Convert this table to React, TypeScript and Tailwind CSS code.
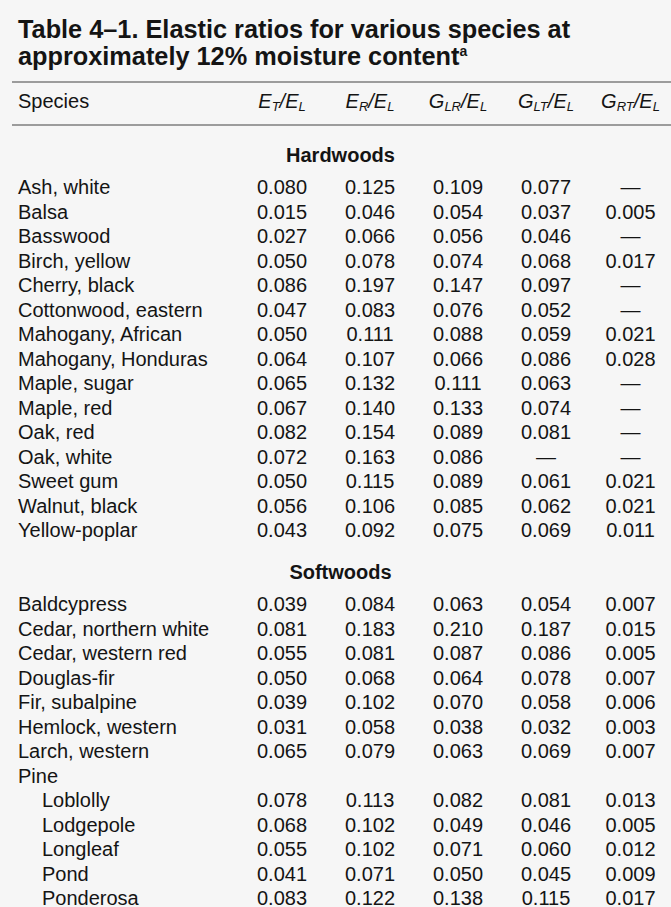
type Row = { name: string; v: string[]; indent?: boolean };

const D = "—";

const hardwoods: Row[] = [
  { name: "Ash, white", v: ["0.080", "0.125", "0.109", "0.077", D] },
  { name: "Balsa", v: ["0.015", "0.046", "0.054", "0.037", "0.005"] },
  { name: "Basswood", v: ["0.027", "0.066", "0.056", "0.046", D] },
  { name: "Birch, yellow", v: ["0.050", "0.078", "0.074", "0.068", "0.017"] },
  { name: "Cherry, black", v: ["0.086", "0.197", "0.147", "0.097", D] },
  { name: "Cottonwood, eastern", v: ["0.047", "0.083", "0.076", "0.052", D] },
  { name: "Mahogany, African", v: ["0.050", "0.111", "0.088", "0.059", "0.021"] },
  { name: "Mahogany, Honduras", v: ["0.064", "0.107", "0.066", "0.086", "0.028"] },
  { name: "Maple, sugar", v: ["0.065", "0.132", "0.111", "0.063", D] },
  { name: "Maple, red", v: ["0.067", "0.140", "0.133", "0.074", D] },
  { name: "Oak, red", v: ["0.082", "0.154", "0.089", "0.081", D] },
  { name: "Oak, white", v: ["0.072", "0.163", "0.086", D, D] },
  { name: "Sweet gum", v: ["0.050", "0.115", "0.089", "0.061", "0.021"] },
  { name: "Walnut, black", v: ["0.056", "0.106", "0.085", "0.062", "0.021"] },
  { name: "Yellow-poplar", v: ["0.043", "0.092", "0.075", "0.069", "0.011"] },
];

const softwoods: Row[] = [
  { name: "Baldcypress", v: ["0.039", "0.084", "0.063", "0.054", "0.007"] },
  { name: "Cedar, northern white", v: ["0.081", "0.183", "0.210", "0.187", "0.015"] },
  { name: "Cedar, western red", v: ["0.055", "0.081", "0.087", "0.086", "0.005"] },
  { name: "Douglas-fir", v: ["0.050", "0.068", "0.064", "0.078", "0.007"] },
  { name: "Fir, subalpine", v: ["0.039", "0.102", "0.070", "0.058", "0.006"] },
  { name: "Hemlock, western", v: ["0.031", "0.058", "0.038", "0.032", "0.003"] },
  { name: "Larch, western", v: ["0.065", "0.079", "0.063", "0.069", "0.007"] },
  { name: "Pine", v: [] },
  { name: "Loblolly", v: ["0.078", "0.113", "0.082", "0.081", "0.013"], indent: true },
  { name: "Lodgepole", v: ["0.068", "0.102", "0.049", "0.046", "0.005"], indent: true },
  { name: "Longleaf", v: ["0.055", "0.102", "0.071", "0.060", "0.012"], indent: true },
  { name: "Pond", v: ["0.041", "0.071", "0.050", "0.045", "0.009"], indent: true },
  { name: "Ponderosa", v: ["0.083", "0.122", "0.138", "0.115", "0.017"], indent: true },
];

const cols = "grid grid-cols-[220px_88px_88px_88px_88px_81px]";

function Ratio({ a, sa, b, sb }: { a: string; sa: string; b: string; sb: string }) {
  return (
    <span className="italic">
      {a}
      <sub className="text-[13px]">{sa}</sub>/{b}
      <sub className="text-[13px]">{sb}</sub>
    </span>
  );
}

function TableRow({ row }: { row: Row }) {
  return (
    <div className={`${cols} leading-[24.5px]`}>
      <div className={row.indent ? "pl-[24px]" : ""}>{row.name}</div>
      {row.v.map((x, i) => (
        <div key={i} className="text-center">
          {x}
        </div>
      ))}
    </div>
  );
}

function Section({ title, rows }: { title: string; rows: Row[] }) {
  return (
    <div>
      <div className="pr-[8px] text-center font-bold leading-[24.5px]">{title}</div>
      <div className="mt-[8px]">
        {rows.map((r) => (
          <TableRow key={r.name} row={r} />
        ))}
      </div>
    </div>
  );
}

export default function App() {
  return (
    <div className="min-h-screen overflow-hidden bg-[#f6f6f6] font-['Liberation_Sans',Arial,sans-serif] text-[20px] text-[#141414]">
      <h1 className="pl-[18px] pt-[16px] text-[25.3px] font-bold leading-[27px]">
        Table 4–1. Elastic ratios for various species at
        <br />
        approximately 12% moisture content
        <span className="relative -top-[9px] text-[14px] font-bold">a</span>
      </h1>

      <div className="ml-[12px] mt-[7px] h-[2px] bg-[#9c9c9c]" />
      <div className={`${cols} pl-[18px] pb-[10px] pt-[6px] leading-[24.5px]`}>
        <div>Species</div>
        <div className="text-center">
          <Ratio a="E" sa="T" b="E" sb="L" />
        </div>
        <div className="text-center">
          <Ratio a="E" sa="R" b="E" sb="L" />
        </div>
        <div className="text-center">
          <Ratio a="G" sa="LR" b="E" sb="L" />
        </div>
        <div className="text-center">
          <Ratio a="G" sa="LT" b="E" sb="L" />
        </div>
        <div className="text-center">
          <Ratio a="G" sa="RT" b="E" sb="L" />
        </div>
      </div>
      <div className="ml-[12px] h-[2px] bg-[#9c9c9c]" />

      <div className="flex flex-col gap-[17px] pl-[18px] pt-[17px]">
        <Section title="Hardwoods" rows={hardwoods} />
        <Section title="Softwoods" rows={softwoods} />
      </div>
    </div>
  );
}
